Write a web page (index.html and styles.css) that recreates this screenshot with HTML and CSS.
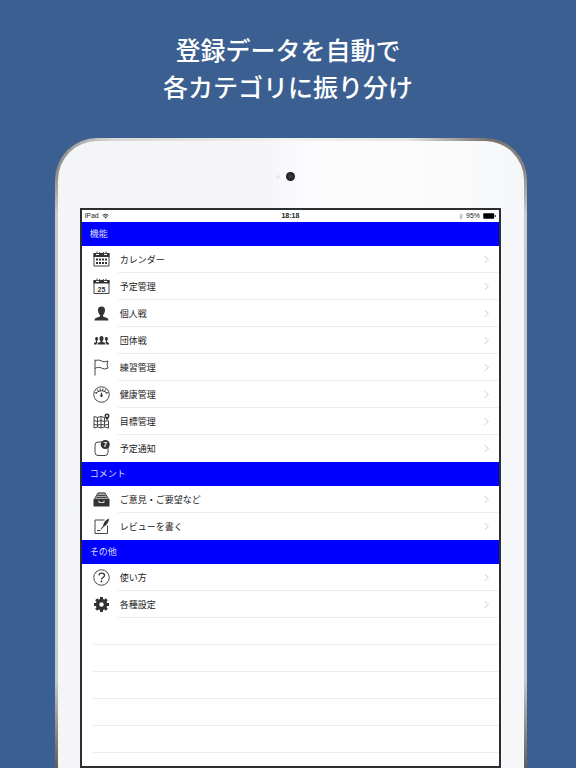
FILE: index.html
```
<!DOCTYPE html>
<html lang="ja">
<head>
<meta charset="utf-8">
<meta name="viewport" content="width=device-width, initial-scale=1">
<title>登録データを自動で各カテゴリに振り分け</title>
<link rel="stylesheet" href="styles.css">
</head>
<body>
<h1 class="headline">登録データを自動で<br>各カテゴリに振り分け</h1>
<main class="tablet">
  <div class="bezel">
    <div class="camera"><span class="sensor"></span><span class="lens"></span></div>
    <div class="screen">
      <div class="status">
        <span class="status-left">iPad
          <svg class="wifi" viewBox="0 0 16 12"><path d="M1 4.500Q8-1.500 15 4.500M3.600 7.200Q8 3.200 12.400 7.200" fill="none" stroke="#222" stroke-width="2"/><path d="M5.500 8.600Q8 6.800 10.500 8.600L8 11.500z" fill="#222"/></svg>
        </span>
        <time class="clock">18:18</time>
        <span class="status-right">
          <svg class="bluetooth" viewBox="0 0 8 12"><path d="M1 3.500l6 5L4 11.500V.5l3 3-6 5" fill="none" stroke="#999" stroke-width="1.200"/></svg>
          95%
          <svg class="battery" viewBox="0 0 26 12"><rect x=".5" y=".5" width="22" height="11" rx="2"/><path d="M24 4q2 0 2 2t-2 2z"/></svg>
        </span>
      </div>

      <section>
        <h2 class="group">機能</h2>
        <ul class="list">
          <li><a class="row" href="#"><svg class="icon" viewBox="0 0 34 34"><path class="line" d="M2 5h30v25H2z"/><path class="fill" d="M1 4h5v4h6V4h10v4h6V4h5v8H1z"/><path class="line" d="M8 1v5M12 5l2-3M26 1v5M22 5l-2-3"/><path class="fill" d="M12 15h4v4h-4zM18 15h4v4h-4zM24 15h4v4h-4zM6 15h4v4H6zM6 22h4v4H6zM12 22h4v4h-4zM18 22h4v4h-4zM24 22h4v4h-4z"/></svg><span class="label">カレンダー</span><svg class="chevron" viewBox="0 0 6 10"><path d="M1 1l4 4-4 4"/></svg></a></li>
          <li><a class="row" href="#"><svg class="icon" viewBox="0 0 34 34"><path class="line" d="M2 5h30v26H2z"/><path class="fill" d="M1 4h5v4h6V4h10v4h6V4h5v7H1z"/><path class="line" d="M8 1v5M12 5l2-3M26 1v5M22 5l-2-3"/><text class="day" x="17" y="27">25</text></svg><span class="label">予定管理</span><svg class="chevron" viewBox="0 0 6 10"><path d="M1 1l4 4-4 4"/></svg></a></li>
          <li><a class="row" href="#"><svg class="icon" viewBox="0 0 34 34"><path class="fill" d="M17 3c5 0 7 3 7 7 0 5-2 8-4 10v3c5 2 11 2 11 8H3c0-6 6-6 11-8v-3c-2-2-4-5-4-10 0-4 2-7 7-7z"/></svg><span class="label">個人戦</span><svg class="chevron" viewBox="0 0 6 10"><path d="M1 1l4 4-4 4"/></svg></a></li>
          <li><a class="row" href="#"><svg class="icon" viewBox="0 0 34 34"><path class="fill" d="M17 8c3 0 4 2 4 5s-1 4-2 5v2c3 1 6 1 6 5H9c0-4 3-4 6-5v-2c-1-1-2-2-2-5s1-5 4-5zM7 10c3 0 4 2 3 5l-2 3v2l2 1c-2 1-3 2-3 4H2c0-4 1-4 4-5v-2c-3-4-2-8 1-8zM27 10c-3 0-4 2-3 5l2 3v2l-2 1c2 1 3 2 3 4h5c0-4-1-4-4-5v-2c3-4 2-8-1-8z"/></svg><span class="label">団体戦</span><svg class="chevron" viewBox="0 0 6 10"><path d="M1 1l4 4-4 4"/></svg></a></li>
          <li><a class="row" href="#"><svg class="icon" viewBox="0 0 34 34"><path class="line" d="M4 1v32M4 4c5-3 9-2 13 0s7 2 13 0l-2 7 2 7c-6 3-9 2-13 0s-8-2-13 1"/></svg><span class="label">練習管理</span><svg class="chevron" viewBox="0 0 6 10"><path d="M1 1l4 4-4 4"/></svg></a></li>
          <li><a class="row" href="#"><svg class="icon" viewBox="0 0 34 34"><circle class="line" cx="17" cy="17" r="15.500"/><path class="line" d="M6 14q11-9 22 0M9 7l2 5M14 5l1 5M20 5l-1 5M25 7l-2 5M4 13l4 2M30 13l-4 2"/><path class="fill" d="M17 12l2 6a2.500 2.500 0 1 1-4 0z"/></svg><span class="label">健康管理</span><svg class="chevron" viewBox="0 0 6 10"><path d="M1 1l4 4-4 4"/></svg></a></li>
          <li><a class="row" href="#"><svg class="icon" viewBox="0 0 34 34"><path class="line" d="M2 7l7 2 7-2 7 2M31 16v14l-8-2-7 2-7-2-7 2V7M9 9v19M16 7v23M23 9v19M2 15l7 2 7-2 7 2 8-2M2 23l7 1 7-1 7 1 8-1"/><path class="fill" fill-rule="evenodd" d="M28 1a5 5 0 0 1 5 5c0 3-3 5-5 9-2-4-5-6-5-9a5 5 0 0 1 5-5zm0 3a2 2 0 1 0 0 4 2 2 0 0 0 0-4z"/></svg><span class="label">目標管理</span><svg class="chevron" viewBox="0 0 6 10"><path d="M1 1l4 4-4 4"/></svg></a></li>
          <li><a class="row" href="#"><svg class="icon" viewBox="0 0 34 34"><rect class="line" x="4" y="4" width="26" height="27" rx="6"/><circle class="fill" cx="24.500" cy="9" r="9"/><text class="count" x="24.500" y="14">7</text></svg><span class="label">予定通知</span><svg class="chevron" viewBox="0 0 6 10"><path d="M1 1l4 4-4 4"/></svg></a></li>
        </ul>
      </section>

      <section>
        <h2 class="group">コメント</h2>
        <ul class="list">
          <li><a class="row" href="#"><svg class="icon" viewBox="0 0 34 34"><path class="shade" d="M10 3h14l8 14H2z"/><path class="line" d="M10 4h14l7 12M10 4L3 16M9 9h16M7 13h20"/><path class="fill" d="M1 16h32v15H1z"/><path d="M12 19v4h10v-4" fill="none" stroke="#ddd" stroke-width="2"/></svg><span class="label">ご意見・ご要望など</span><svg class="chevron" viewBox="0 0 6 10"><path d="M1 1l4 4-4 4"/></svg></a></li>
          <li><a class="row" href="#"><svg class="icon" viewBox="0 0 34 34"><path class="line" d="M23 4H4v27h25V15M8 25h7"/><path class="fill" d="M32 1c0 7-4 13-11 17l-5 5-1-1 5-6C21 9 25 4 32 1z"/></svg><span class="label">レビューを書く</span><svg class="chevron" viewBox="0 0 6 10"><path d="M1 1l4 4-4 4"/></svg></a></li>
        </ul>
      </section>

      <section>
        <h2 class="group">その他</h2>
        <ul class="list list-last">
          <li><a class="row" href="#"><svg class="icon" viewBox="0 0 34 34"><circle class="line" cx="17" cy="17" r="15.500"/><path class="question" d="M12 13c0-7 11-6 11 0 0 4-6 4-6 8"/><circle class="fill" cx="17" cy="25" r="1.800"/></svg><span class="label">使い方</span><svg class="chevron" viewBox="0 0 6 10"><path d="M1 1l4 4-4 4"/></svg></a></li>
          <li><a class="row" href="#"><svg class="icon" viewBox="0 0 34 34"><circle cx="17" cy="17" r="8" fill="none" stroke="#333" stroke-width="7"/><path d="M17 2v6M17 26v6M2 17h6M26 17h6M6.400 6.400l4 4M23.600 23.600l4 4M27.600 6.400l-4 4M10.400 23.600l-4 4" stroke="#333" stroke-width="6"/></svg><span class="label">各種設定</span><svg class="chevron" viewBox="0 0 6 10"><path d="M1 1l4 4-4 4"/></svg></a></li>
        </ul>
      </section>
      <div class="blank"></div>
    </div>
  </div>
</main>
</body>
</html>
```
FILE: styles.css
```
* { box-sizing: border-box; }

body {
  margin: 0;
  min-height: 100vh;
  display: flex;
  flex-direction: column;
  background: #3b5f90;
  color: #222;
  font-family: "Liberation Sans", "Noto Sans CJK JP", sans-serif;
}

.headline {
  margin: 0;
  padding: 31px 0 33px;
  color: #fff;
  font-family: "Noto Sans CJK JP", sans-serif;
  font-size: 25px;
  font-weight: 500;
  line-height: 37px;
  text-align: center;
}

.tablet {
  flex: 1;
  display: flex;
  margin: 0 8.5% 0 9.5%;
  padding: 3px 3px 0;
  border-radius: 42px 42px 0 0;
  background:
    linear-gradient(90deg, #8b8886, #d5d7d8 12%, #f2f2f2 50%, #e5e5e5 75%, #77716e 92%, #8b8886) top / 100% 32px no-repeat,
    linear-gradient(#8b8886 32px, #c9cbcd 12%, #c4c9cd 86%, #625e5a);
}

.bezel {
  flex: 1;
  display: flex;
  flex-direction: column;
  padding: 0 23px 0 22px;
  border-radius: 39px 39px 0 0;
  background: linear-gradient(90deg, #f4f5f6, #f5f5f8 44%, #fcfbfd 54%, #fbfbfc 85%, #f4f6f8);
}

.camera {
  height: 67px;
  display: flex;
  align-items: center;
  justify-content: center;
  gap: 6px;
  padding: 4px 10px 0 0;
}

.sensor {
  width: 4px;
  height: 4px;
  border-radius: 50%;
  background: #e8e8eb;
}

.lens {
  width: 9px;
  height: 9px;
  border-radius: 50%;
  background: radial-gradient(#444, #181a1c 70%);
}

.screen {
  flex: 1;
  display: flex;
  flex-direction: column;
  border: 2px solid #2d2e31;
  background: #fff;
}

.status {
  height: 12px;
  display: grid;
  grid-template-columns: 1fr auto 1fr;
  align-items: center;
  padding: 0 3px;
  font-size: 7px;
  line-height: 12px;
}

.status-left,
.status-right {
  display: flex;
  align-items: center;
  gap: 3px;
}

.status-right { justify-content: flex-end; }
.clock { font-weight: bold; }
.wifi { width: 7px; height: 6px; }
.bluetooth { width: 4px; height: 7px; }
.battery { width: 13px; height: 6px; }

.group {
  height: 24px;
  margin: 0;
  padding-left: 8px;
  background: #00f;
  color: #dcdcf5;
  font-size: 9px;
  font-weight: 400;
  line-height: 24px;
}

.list {
  margin: 0;
  padding: 0;
  list-style: none;
}

.row {
  height: 27px;
  display: flex;
  align-items: center;
  padding: 0 10px 0 11px;
  background: linear-gradient(#ececee, #ececee) right bottom / calc(100% - 36px) 1px no-repeat;
  color: inherit;
  text-decoration: none;
}

.list:not(.list-last) li:last-child .row { background: none; }

.icon {
  width: 17px;
  height: 17px;
  margin-right: 10px;
}

.line {
  fill: none;
  stroke: #444;
  stroke-width: 2;
}

.fill { fill: #333; }
.shade { fill: #aaa; }

.question {
  fill: none;
  stroke: #333;
  stroke-width: 2.5;
}

.day,
.count {
  fill: #333;
  font-size: 14px;
  font-weight: bold;
  text-anchor: middle;
}

.count { fill: #fff; }

.label {
  flex: 1;
  font-size: 9px;
  line-height: 26px;
}

.chevron {
  width: 5px;
  height: 9px;
  fill: none;
  stroke: #bbb;
}

.blank {
  flex: 1;
  min-height: 135px;
  margin-left: 11px;
  background: repeating-linear-gradient(#fff 0 26px, #ececee 26px 27px);
}
```
